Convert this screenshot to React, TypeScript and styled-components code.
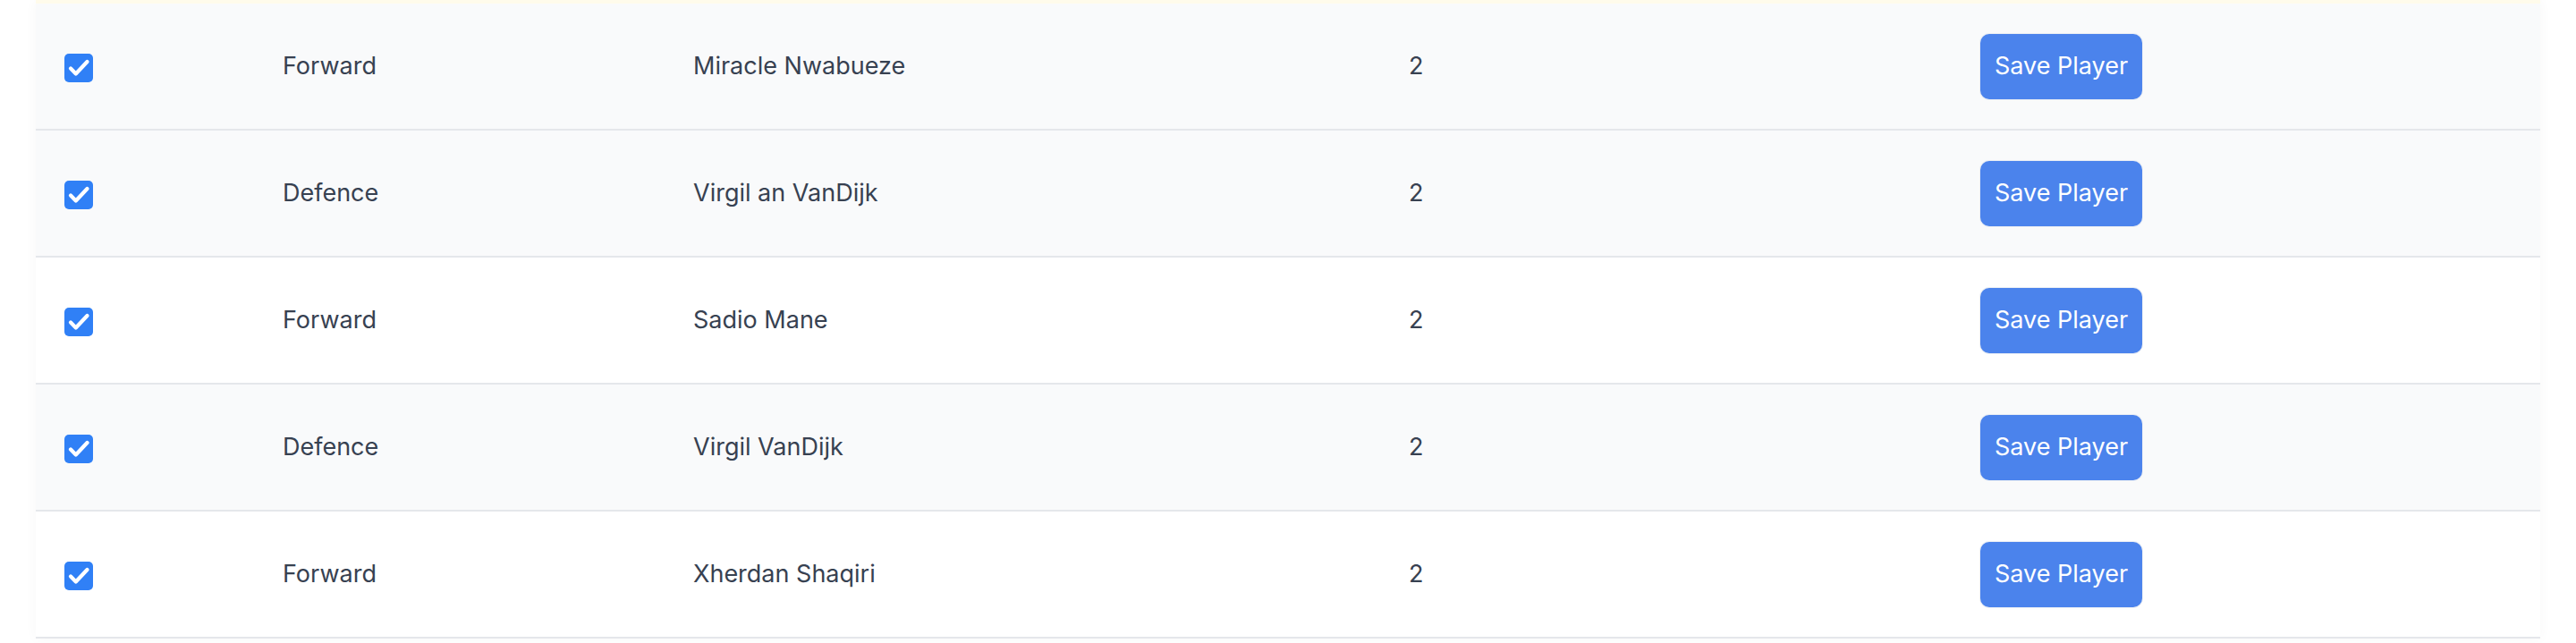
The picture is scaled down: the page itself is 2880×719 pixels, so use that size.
import React from "react";
import styled, { createGlobalStyle } from "styled-components";

const GlobalStyle = createGlobalStyle`
  html, body {
    margin: 0;
    padding: 0;
    background: #ffffff;
    font-family: Inter, "Noto Sans", "Liberation Sans", sans-serif;
  }
  * { box-sizing: border-box; }
`;

const Page = styled.div`
  padding: 0 40px;
  height: 719px;
  overflow: hidden;
`;

const Table = styled.div`
  width: 2800px;
  box-shadow: 0 0 14px rgba(0, 0, 0, 0.035);
`;

const TopStrip = styled.div`
  height: 4px;
  background: #fffbeb;
`;

const Row = styled.div<{ $shaded: boolean }>`
  display: grid;
  grid-template-columns: 244px 459px 800px 639px 1fr;
  align-items: center;
  height: 142px;
  border-bottom: 2px solid #e5e7eb;
  background: ${(p) => (p.$shaded ? "#f9fafb" : "#ffffff")};
`;

const Cell = styled.div`
  padding-left: 32px;
  font-size: 27px;
  line-height: 40px;
  color: #374151;
  white-space: nowrap;
`;

const CheckBox = styled.span`
  display: inline-flex;
  width: 32px;
  height: 32px;
  border-radius: 5px;
  background: #3080f6;
  vertical-align: middle;
  svg {
    display: block;
  }
`;

const SaveButton = styled.button`
  height: 73px;
  padding: 0 16px;
  border: none;
  border-radius: 10px;
  background: #4b83ec;
  color: #ffffff;
  font-family: Inter, "Noto Sans", "Liberation Sans", sans-serif;
  font-size: 27px;
  line-height: 40px;
  cursor: pointer;
  box-shadow: 0 0 0 1px rgba(230, 235, 243, 0.8);
`;

const players = [
  { position: "Forward", name: "Miracle Nwabueze", count: 2, shaded: true },
  { position: "Defence", name: "Virgil an VanDijk", count: 2, shaded: true },
  { position: "Forward", name: "Sadio Mane", count: 2, shaded: false },
  { position: "Defence", name: "Virgil VanDijk", count: 2, shaded: true },
  { position: "Forward", name: "Xherdan Shaqiri", count: 2, shaded: false },
];

const Check = () => (
  <CheckBox>
    <svg width="32" height="32" viewBox="0 0 32 32">
      <path
        d="M7 16.5 L12.8 22.5 L25.5 9"
        fill="none"
        stroke="#ffffff"
        strokeWidth="4.2"
        strokeLinecap="round"
        strokeLinejoin="round"
      />
    </svg>
  </CheckBox>
);

export default function App() {
  return (
    <>
      <GlobalStyle />
      <Page>
        <Table>
          <TopStrip />
          {players.map((p, i) => (
            <Row key={i} $shaded={p.shaded}>
              <Cell>
                <Check />
              </Cell>
              <Cell>{p.position}</Cell>
              <Cell>{p.name}</Cell>
              <Cell>{p.count}</Cell>
              <Cell>
                <SaveButton>Save Player</SaveButton>
              </Cell>
            </Row>
          ))}
        </Table>
      </Page>
    </>
  );
}
